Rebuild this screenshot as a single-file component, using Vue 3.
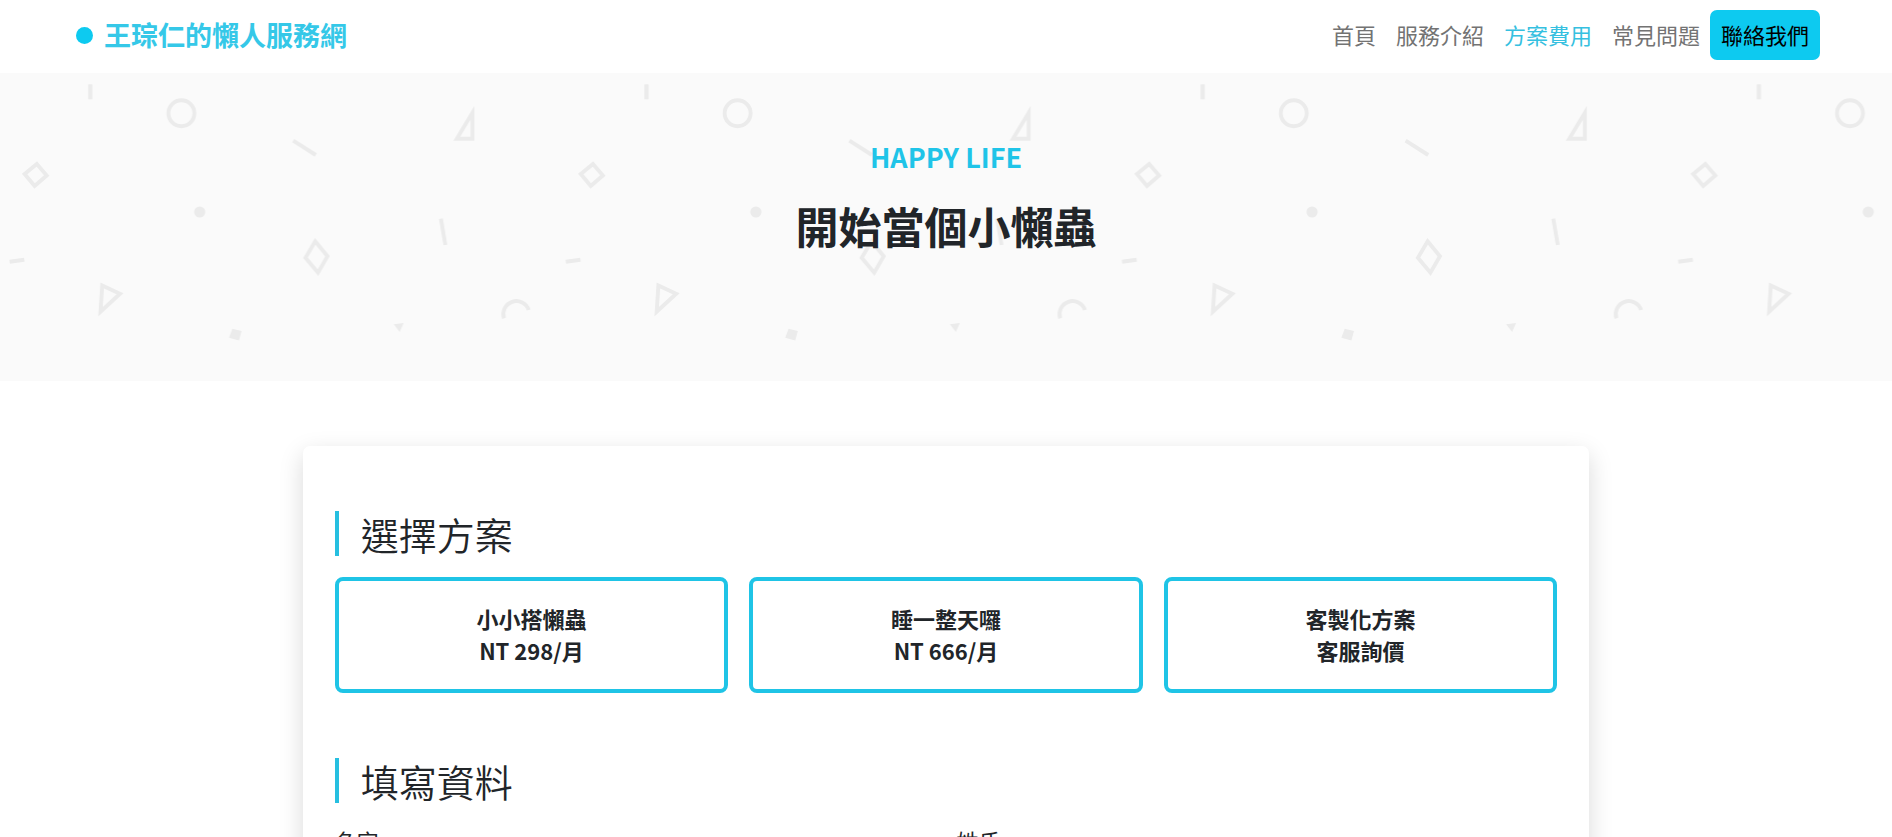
<script setup>
import { ref } from 'vue'

const links = [
  { label: '首頁', active: false },
  { label: '服務介紹', active: false },
  { label: '方案費用', active: true },
  { label: '常見問題', active: false },
]

const plans = [
  { name: '小小搭懶蟲', price: 'NT 298/月' },
  { name: '睡一整天囉', price: 'NT 666/月' },
  { name: '客製化方案', price: '客服詢價' },
]

const firstName = ref('')
const lastName = ref('')
</script>

<template>
  <div class="page">
    <header class="navbar">
      <a class="brand" href="#">
        <span class="brand-dot"></span>
        <span>王琮仁的懶人服務網</span>
      </a>
      <nav class="menu">
        <a
          v-for="link in links"
          :key="link.label"
          class="menu-link"
          :class="{ active: link.active }"
          href="#"
        >{{ link.label }}</a>
        <button class="contact" type="button">聯絡我們</button>
      </nav>
    </header>

    <section class="hero">
      <svg class="hero-pattern" aria-hidden="true">
        <defs>
          <pattern id="confetti" width="556.2" height="308" patternUnits="userSpaceOnUse">
            <g fill="none" stroke="#ebebeb" stroke-width="3.9">
              <path d="M90.3 11.3v15" stroke-width="4.2" />
              <circle cx="181.4" cy="40.3" r="13" />
              <path d="M293.2 67.6L315.8 82" />
              <path d="M36.8 90.9L46.7 102.5L34.6 113L24.6 100.9Z" />
              <path d="M9.6 188.7L24.3 186.8" />
              <path d="M315.2 168.3L327.5 183.3L318 199.7L305.5 184.7Z" />
              <path d="M102.2 212.5L120 220.8L100.5 238.8Z" />
              <path d="M472.5 39.7V65.7H456.8Z" />
              <path d="M440.9 145.7L445.4 172" />
              <path d="M504 245.3A12.8 12.8 0 1 1 528.7 237" />
            </g>
            <g fill="#ebebeb">
              <circle cx="199.7" cy="139" r="5.6" />
              <path d="M232.3 255.7L241.6 258L239 267.6L229 264.7Z" />
              <path d="M393.7 251.3L403.7 250L399.7 259Z" />
            </g>
          </pattern>
        </defs>
        <rect width="100%" height="100%" fill="url(#confetti)" />
      </svg>
      <div class="hero-text">
        <p class="eyebrow">HAPPY LIFE</p>
        <h1 class="title">開始當個小懶蟲</h1>
      </div>
    </section>

    <main class="order">
      <section class="block">
        <h2 class="block-title">選擇方案</h2>
        <div class="plans">
          <button v-for="plan in plans" :key="plan.name" class="plan" type="button">
            <span>{{ plan.name }}</span>
            <span>{{ plan.price }}</span>
          </button>
        </div>
      </section>
      <section class="block">
        <h2 class="block-title">填寫資料</h2>
        <form class="fields">
          <div class="field">
            <label for="first-name">名字</label>
            <input id="first-name" v-model="firstName" type="text" />
          </div>
          <div class="field">
            <label for="last-name">姓氏</label>
            <input id="last-name" v-model="lastName" type="text" />
          </div>
        </form>
      </section>
    </main>
  </div>
</template>

<style>
body {
  margin: 0;
  background: #fff;
}
</style>

<style scoped>
.page {
  font-family: "Noto Sans CJK TC", sans-serif;
  font-size: 22px;
  line-height: 32px;
  color: #212529;
}

.page * {
  box-sizing: border-box;
}

.page button,
.page input {
  font: inherit;
  color: inherit;
}

.navbar {
  display: flex;
  align-items: center;
  justify-content: space-between;
  padding: 10px 72px 13px 76px;
}

.brand {
  display: flex;
  align-items: center;
  gap: 11px;
  font-size: 27px;
  font-weight: 700;
  color: #35c8e8;
  text-decoration: none;
}

.brand-dot {
  width: 17px;
  height: 17px;
  border-radius: 50%;
  background: #0dcaf0;
}

.menu {
  display: flex;
  align-items: center;
}

.menu-link {
  padding: 0 10px 2px;
  color: #737373;
  text-decoration: none;
}

.menu-link.active {
  color: #35c0e0;
}

.page .contact {
  padding: 8px 11px 10px;
  border: 0;
  border-radius: 7px;
  background: #0dcaf0;
  color: #000;
}

.hero {
  position: relative;
  padding: 64px 24px 128px;
  background: #fafafa;
  text-align: center;
}

.hero-pattern {
  position: absolute;
  inset: 0;
  width: 100%;
  height: 100%;
}

.hero-text {
  position: relative;
  display: flex;
  flex-direction: column;
  gap: 20px;
}

.eyebrow {
  margin: 0;
  font-size: 27px;
  line-height: 40px;
  font-weight: 700;
  color: #1fc4e8;
}

.title {
  margin: 0;
  font-size: 43px;
  line-height: 56px;
  font-weight: 700;
}

.order {
  width: 68%;
  margin: 65px auto;
  padding: 0 32px 65px;
  border-radius: 7px;
  background: #fff;
  box-shadow: 0 8px 24px rgba(0, 0, 0, 0.15);
}

.block {
  padding-top: 65px;
}

.block-title {
  margin: 0 0 21px;
  padding-left: 22px;
  border-left: 4px solid #26bfe0;
  font-size: 38px;
  line-height: 45px;
  font-weight: 350;
}

.plans {
  display: grid;
  grid-template-columns: repeat(3, 1fr);
  gap: 21px;
}

.page .plan {
  display: flex;
  flex-direction: column;
  align-items: center;
  padding: 21px 22px 23px;
  border: 4px solid #1fc4e6;
  border-radius: 8px;
  background: #fff;
  font-weight: 700;
}

.fields {
  display: grid;
  grid-template-columns: repeat(2, 1fr);
  gap: 21px;
}

.field {
  display: flex;
  flex-direction: column;
  gap: 10px;
}

.field input {
  width: 100%;
  padding: 8px 16px;
  border: 1px solid #ced4da;
  border-radius: 6px;
}
</style>
